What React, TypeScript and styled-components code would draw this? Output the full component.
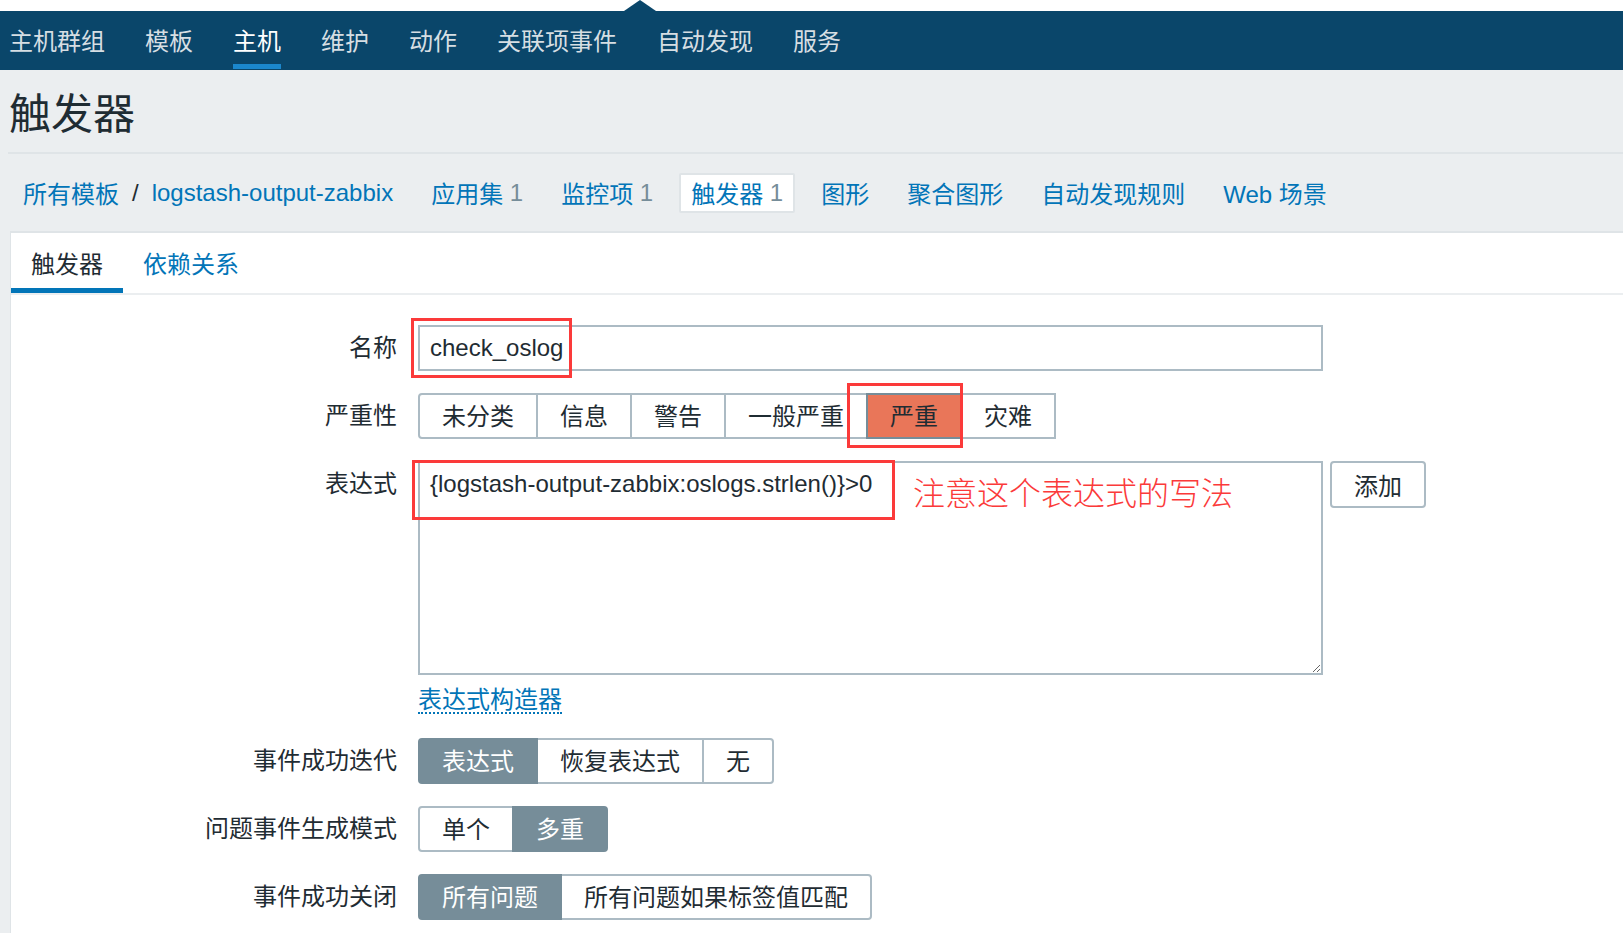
import React from "react";
import styled, { createGlobalStyle } from "styled-components";

const GlobalStyle = createGlobalStyle`
  html, body { margin: 0; padding: 0; overflow: hidden; }
  body {
    background: #ebeef0;
    font-family: "Liberation Sans", Arial, "Noto Sans CJK SC", sans-serif;
    color: #1f2c33;
    font-size: 24px;
  }
  * { box-sizing: border-box; }
`;

const Page = styled.div`
  width: 1623px;
  height: 933px;
  background: #ebeef0;
  overflow: hidden;
`;

const TopStrip = styled.div`
  position: relative;
  height: 11px;
  background: #ffffff;
`;

const Arrow = styled.span`
  position: absolute;
  left: 624px;
  bottom: 0;
  width: 0;
  height: 0;
  border-left: 16px solid transparent;
  border-right: 16px solid transparent;
  border-bottom: 11px solid #0a466a;
`;

const NavBar = styled.nav`
  height: 59px;
  background: #0a466a;
  display: flex;
  align-items: flex-start;
  gap: 40px;
  padding-left: 9px;
`;

const NavItem = styled.a<{ $active?: boolean }>`
  height: 58px;
  display: flex;
  align-items: center;
  padding-top: 3px;
  border-bottom: 5px solid ${(p) => (p.$active ? "#1b87cc" : "transparent")};
  color: ${(p) => (p.$active ? "#ffffff" : "#d6dee3")};
  font-size: 24px;
  text-decoration: none;
  white-space: nowrap;
`;

const Header = styled.header`
  margin-left: 8px;
  height: 84px;
  padding: 20px 0 0 1px;
  border-bottom: 2px solid #dfe4e7;
`;

const Title = styled.h1`
  margin: 0;
  font-size: 42px;
  font-weight: normal;
  line-height: 50px;
  color: #1f2c33;
`;

const Crumbs = styled.div`
  height: 77px;
  display: flex;
  align-items: center;
  gap: 14px;
  padding-left: 11px;
`;

const Crumb = styled.div<{ $selected?: boolean }>`
  height: 40px;
  display: flex;
  align-items: center;
  padding: 0 10px;
  border: 2px solid ${(p) => (p.$selected ? "#dfe4e7" : "transparent")};
  border-radius: 2px;
  background: ${(p) => (p.$selected ? "#ffffff" : "transparent")};
  white-space: nowrap;
`;

const CrumbLink = styled.a`
  color: #0275b8;
  text-decoration: none;
  font-size: 24px;
`;

const CrumbSep = styled.span`
  margin: 0 13px;
  color: #1f2c33;
`;

const Count = styled.span`
  color: #768d99;
`;

const Content = styled.main`
  margin-left: 10px;
  background: #ffffff;
  border-top: 2px solid #dfe4e7;
  border-left: 1px solid #dfe4e7;
  height: 800px;
`;

const TabList = styled.div`
  height: 62px;
  display: flex;
  border-bottom: 2px solid #ebeef0;
`;

const Tab = styled.a<{ $active?: boolean }>`
  height: 60px;
  display: flex;
  align-items: center;
  padding: 3px 20px 0;
  border-bottom: 5px solid ${(p) => (p.$active ? "#0275b8" : "transparent")};
  color: ${(p) => (p.$active ? "#1f2c33" : "#0275b8")};
  text-decoration: none;
  font-size: 24px;
  white-space: nowrap;
`;

const Form = styled.div`
  display: grid;
  grid-template-columns: 386px auto;
  column-gap: 21px;
  row-gap: 22px;
  padding-top: 30px;
  align-items: start;
`;

const Label = styled.div`
  height: 46px;
  line-height: 46px;
  text-align: right;
  font-size: 24px;
  white-space: nowrap;
  color: #1f2c33;
`;

const Field = styled.div`
  position: relative;
  display: flex;
  flex-direction: column;
  align-items: flex-start;
`;

const TextInput = styled.input`
  width: 905px;
  height: 46px;
  border: 2px solid #acbbc4;
  padding: 0 10px;
  font-family: inherit;
  font-size: 24px;
  color: #1f2c33;
  background: #ffffff;
  outline: none;
`;

const Segmented = styled.div`
  position: relative;
  display: inline-flex;
  height: 46px;
`;

const Seg = styled.div<{ $on?: boolean; $tone?: "gray" | "high" }>`
  position: relative;
  z-index: ${(p) => (p.$on ? 1 : 0)};
  display: flex;
  align-items: center;
  height: 46px;
  padding: 0 22px 3px;
  margin-left: -2px;
  border: 2px solid ${(p) => (p.$on ? "#768d99" : "#acbbc4")};
  background: ${(p) =>
    p.$on ? (p.$tone === "high" ? "#e97659" : "#768d99") : "#ffffff"};
  color: ${(p) => (p.$on && p.$tone !== "high" ? "#ffffff" : "#1f2c33")};
  font-size: 24px;
  white-space: nowrap;
  &:first-child {
    margin-left: 0;
    border-radius: 4px 0 0 4px;
  }
  &:last-child {
    border-radius: 0 4px 4px 0;
  }
`;

const ExprRow = styled.div`
  position: relative;
  display: flex;
  align-items: flex-start;
  gap: 7px;
`;

const ExprArea = styled.textarea`
  width: 905px;
  height: 214px;
  border: 2px solid #acbbc4;
  padding: 7px 10px;
  font-family: inherit;
  font-size: 24px;
  line-height: 28px;
  color: #1f2c33;
  background: #ffffff;
  outline: none;
  resize: both;
`;

const Button = styled.button`
  height: 47px;
  padding: 0 22px;
  border: 2px solid #acbbc4;
  border-radius: 4px;
  background: #ffffff;
  font-family: inherit;
  font-size: 24px;
  color: #1f2c33;
`;

const BuilderLink = styled.a`
  display: inline-block;
  margin: 13px 0 2px;
  line-height: 24px;
  font-size: 24px;
  color: #0275b8;
  text-decoration: none;
  border-bottom: 2px dotted #0275b8;
`;

const Mark = styled.div<{ $l: number; $t: number; $w: number; $h: number }>`
  position: absolute;
  left: ${(p) => p.$l}px;
  top: ${(p) => p.$t}px;
  width: ${(p) => p.$w}px;
  height: ${(p) => p.$h}px;
  border: 3px solid #fb3a3a;
  pointer-events: none;
  z-index: 5;
`;

const Note = styled.div`
  position: absolute;
  left: 495px;
  top: 10px;
  font-family: "Noto Sans CJK SC", sans-serif;
  font-weight: 300;
  font-size: 32px;
  line-height: 40px;
  color: #fb3a3a;
  white-space: nowrap;
  z-index: 5;
`;

const navItems = ["主机群组", "模板", "主机", "维护", "动作", "关联项事件", "自动发现", "服务"];

export default function App() {
  return (
    <Page>
      <GlobalStyle />
      <TopStrip>
        <Arrow />
      </TopStrip>
      <NavBar>
        {navItems.map((n) => (
          <NavItem key={n} $active={n === "主机"}>
            {n}
          </NavItem>
        ))}
      </NavBar>
      <Header>
        <Title>触发器</Title>
      </Header>
      <Crumbs>
        <Crumb>
          <CrumbLink>所有模板</CrumbLink>
          <CrumbSep>/</CrumbSep>
          <CrumbLink>logstash-output-zabbix</CrumbLink>
        </Crumb>
        <Crumb>
          <CrumbLink>应用集</CrumbLink>
          <Count>&nbsp;1</Count>
        </Crumb>
        <Crumb>
          <CrumbLink>监控项</CrumbLink>
          <Count>&nbsp;1</Count>
        </Crumb>
        <Crumb $selected>
          <CrumbLink>触发器</CrumbLink>
          <Count>&nbsp;1</Count>
        </Crumb>
        <Crumb>
          <CrumbLink>图形</CrumbLink>
        </Crumb>
        <Crumb>
          <CrumbLink>聚合图形</CrumbLink>
        </Crumb>
        <Crumb>
          <CrumbLink>自动发现规则</CrumbLink>
        </Crumb>
        <Crumb>
          <CrumbLink>Web 场景</CrumbLink>
        </Crumb>
      </Crumbs>
      <Content>
        <TabList>
          <Tab $active>触发器</Tab>
          <Tab>依赖关系</Tab>
        </TabList>
        <Form>
          <Label>名称</Label>
          <Field>
            <TextInput readOnly value="check_oslog" />
            <Mark $l={-7} $t={-7} $w={161} $h={60} />
          </Field>

          <Label>严重性</Label>
          <Field>
            <Segmented>
              <Seg>未分类</Seg>
              <Seg>信息</Seg>
              <Seg>警告</Seg>
              <Seg>一般严重</Seg>
              <Seg $on $tone="high">严重</Seg>
              <Seg>灾难</Seg>
              <Mark $l={429} $t={-10} $w={116} $h={65} />
            </Segmented>
          </Field>

          <Label>表达式</Label>
          <Field>
            <ExprRow>
              <ExprArea readOnly value="{logstash-output-zabbix:oslogs.strlen()}>0" />
              <Button>添加</Button>
              <Mark $l={-6} $t={-1} $w={483} $h={60} />
              <Note>注意这个表达式的写法</Note>
            </ExprRow>
            <BuilderLink>表达式构造器</BuilderLink>
          </Field>

          <Label>事件成功迭代</Label>
          <Field>
            <Segmented>
              <Seg $on>表达式</Seg>
              <Seg>恢复表达式</Seg>
              <Seg>无</Seg>
            </Segmented>
          </Field>

          <Label>问题事件生成模式</Label>
          <Field>
            <Segmented>
              <Seg>单个</Seg>
              <Seg $on>多重</Seg>
            </Segmented>
          </Field>

          <Label>事件成功关闭</Label>
          <Field>
            <Segmented>
              <Seg $on>所有问题</Seg>
              <Seg>所有问题如果标签值匹配</Seg>
            </Segmented>
          </Field>
        </Form>
      </Content>
    </Page>
  );
}
